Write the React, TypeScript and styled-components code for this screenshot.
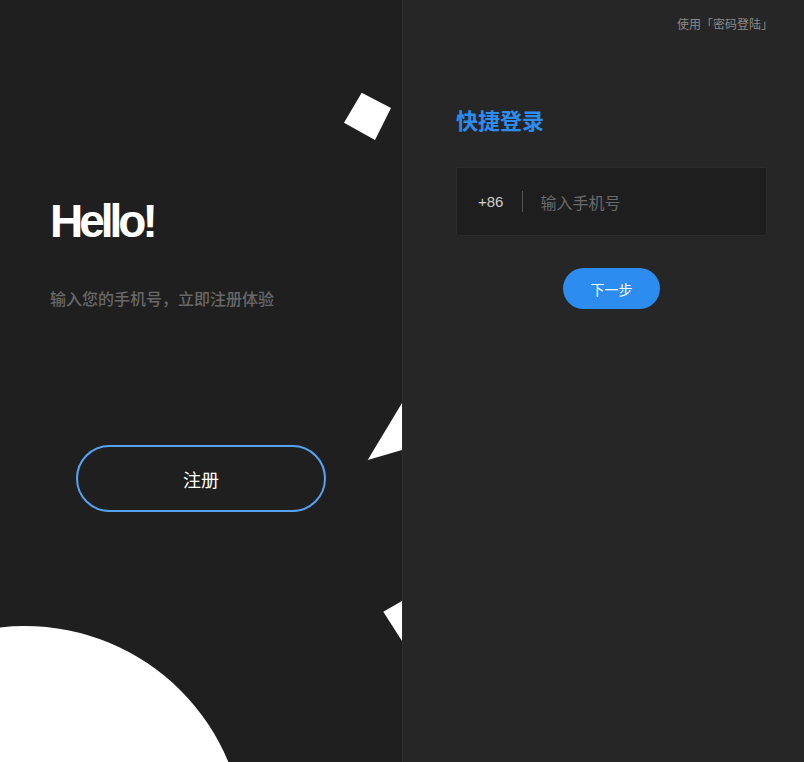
import styled, { createGlobalStyle } from 'styled-components'

const GlobalStyle = createGlobalStyle`
  html, body {
    margin: 0;
    padding: 0;
    background: #1f1f1f;
  }
  body {
    font-family: "Liberation Sans", "Noto Sans CJK SC", sans-serif;
  }
  * {
    box-sizing: border-box;
  }
`

function Decorations() {
  return (
    <DecoLayer viewBox="0 0 402 762" aria-hidden="true">
      <polygon points="361.7,92.7 391,108 375,140 344,122.7" fill="#ffffff" />
      <polygon points="402,403 367.7,460 402,450" fill="#ffffff" />
      <polygon points="402,601 383.3,611.7 402,641" fill="#ffffff" />
      <circle cx="25" cy="846" r="220" fill="#ffffff" />
    </DecoLayer>
  )
}

export default function App() {
  return (
    <>
      <GlobalStyle />
      <Page>
        <WelcomePanel>
          <Decorations />
          <Greeting>Hello!</Greeting>
          <Intro>输入您的手机号，立即注册体验</Intro>
          <OutlineButton type="button">注册</OutlineButton>
        </WelcomePanel>

        <LoginPanel>
          <TopBar>
            <SwitchLink href="#">使用「密码登陆」</SwitchLink>
          </TopBar>
          <LoginTitle>快捷登录</LoginTitle>
          <PhoneField>
            <AreaCode>+86</AreaCode>
            <FieldDivider />
            <PhoneInput placeholder="输入手机号" />
          </PhoneField>
          <ButtonRow>
            <PrimaryButton type="button">下一步</PrimaryButton>
          </ButtonRow>
        </LoginPanel>
      </Page>
    </>
  )
}

const Page = styled.main`
  display: flex;
  width: 100%;
  height: 100vh;
  min-height: 762px;
  overflow: hidden;
`

const WelcomePanel = styled.section`
  position: relative;
  display: flex;
  width: 402px;
  flex: 0 0 402px;
  flex-direction: column;
  align-items: flex-start;
  padding: 198px 0 0 50px;
  overflow: hidden;
  background: #1f1f1f;
`

const DecoLayer = styled.svg`
  position: absolute;
  top: 0;
  left: 0;
  width: 402px;
  height: 762px;
  pointer-events: none;
`

const Greeting = styled.h1`
  position: relative;
  margin: 0;
  color: #ffffff;
  font-family: "Liberation Sans", sans-serif;
  font-size: 46px;
  font-weight: 700;
  line-height: 46px;
  letter-spacing: -4px;
`

const Intro = styled.p`
  position: relative;
  margin: 46px 0 0;
  color: #686868;
  font-family: "Noto Sans CJK SC", sans-serif;
  font-size: 16px;
  font-weight: 500;
  line-height: 16px;
`

const OutlineButton = styled.button`
  position: relative;
  width: 250px;
  height: 67px;
  margin: 139px 0 0 26px;
  border: 2px solid #57a3f3;
  border-radius: 34px;
  background: transparent;
  color: #ffffff;
  font-family: "Noto Sans CJK SC", sans-serif;
  font-size: 18px;
  font-weight: 400;
  cursor: pointer;
`

const LoginPanel = styled.section`
  display: flex;
  flex: 1;
  flex-direction: column;
  padding: 0 31px 0 53px;
  border-left: 1px solid #2c2c2c;
  background: #262626;
`

const TopBar = styled.div`
  display: flex;
  justify-content: flex-end;
  padding-top: 16px;
`

const SwitchLink = styled.a`
  color: #8a8a8a;
  font-family: "Noto Sans CJK SC", sans-serif;
  font-size: 12px;
  line-height: 16px;
  text-decoration: none;
`

const LoginTitle = styled.h2`
  margin: 76px 0 0;
  color: #2d8cf0;
  font-family: "Noto Sans CJK SC", sans-serif;
  font-size: 22px;
  font-weight: 700;
  line-height: 22px;
`

const PhoneField = styled.div`
  display: flex;
  width: 311px;
  height: 69px;
  margin-top: 37px;
  align-items: center;
  padding: 0 20px 0 21px;
  border: 1px solid #2b2b2b;
  border-radius: 2px;
  background: #1e1e1e;
`

const AreaCode = styled.span`
  color: #d0d0d0;
  font-family: "Liberation Sans", sans-serif;
  font-size: 15px;
`

const FieldDivider = styled.span`
  width: 1px;
  height: 21px;
  margin: 0 17px 0 19px;
  background: #555555;
`

const PhoneInput = styled.input`
  flex: 1;
  min-width: 0;
  border: 0;
  padding: 0;
  background: transparent;
  color: #dddddd;
  font-family: "Noto Sans CJK SC", sans-serif;
  font-size: 16px;
  outline: none;

  &::placeholder {
    color: #6a6a6a;
  }
`

const ButtonRow = styled.div`
  display: flex;
  width: 311px;
  justify-content: center;
  margin-top: 32px;
`

const PrimaryButton = styled.button`
  width: 97px;
  height: 41px;
  border: 0;
  border-radius: 21px;
  background: #2d8cf0;
  color: #ffffff;
  font-family: "Noto Sans CJK SC", sans-serif;
  font-size: 14px;
  cursor: pointer;
`
